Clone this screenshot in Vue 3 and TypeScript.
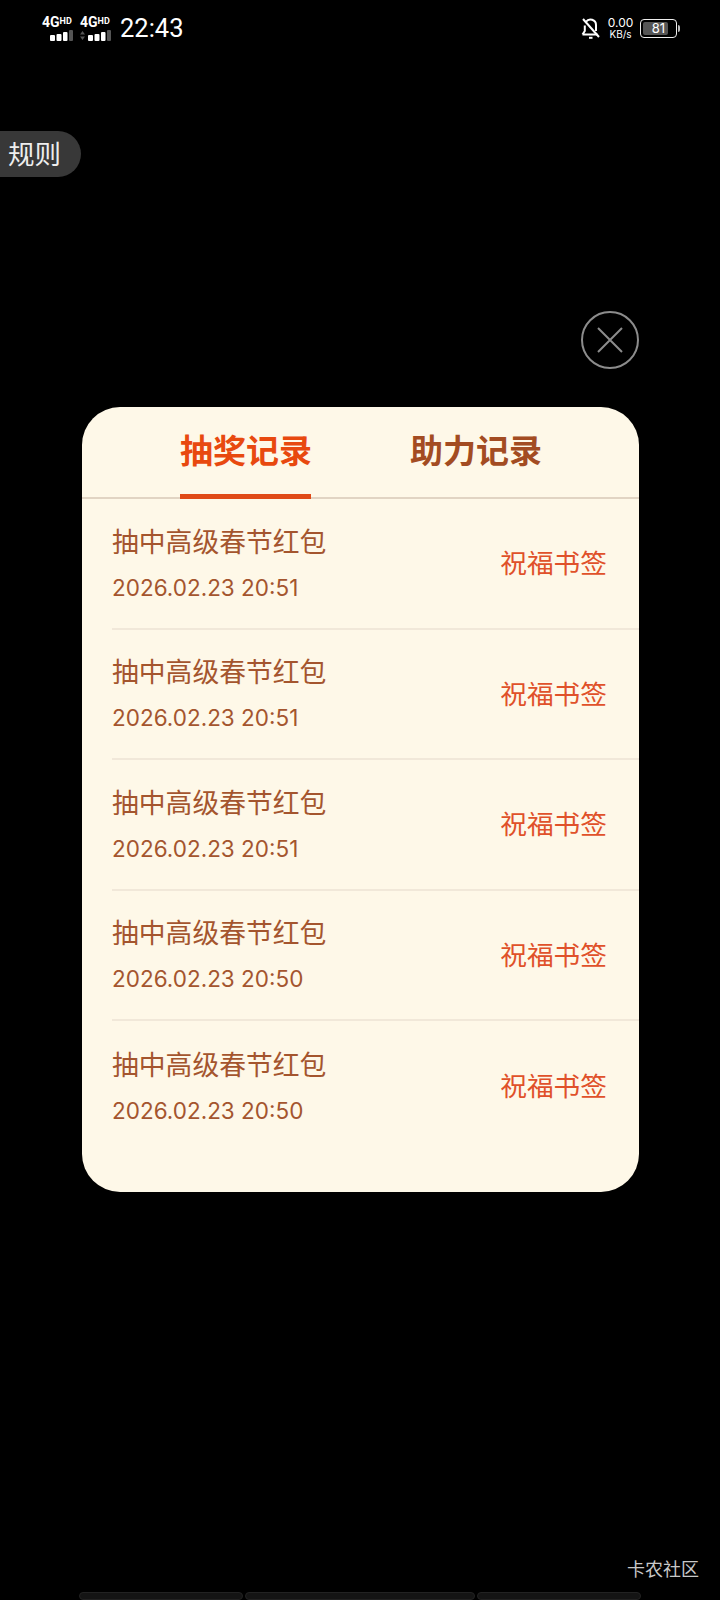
<script setup lang="ts">
import { ref } from "vue";

type RecordRow = { title: string; time: string; action: string };

const tabs = ["抽奖记录", "助力记录"];
const activeTab = ref(0);

const rows: RecordRow[] = [
  { title: "抽中高级春节红包", time: "2026.02.23 20:51", action: "祝福书签" },
  { title: "抽中高级春节红包", time: "2026.02.23 20:51", action: "祝福书签" },
  { title: "抽中高级春节红包", time: "2026.02.23 20:51", action: "祝福书签" },
  { title: "抽中高级春节红包", time: "2026.02.23 20:50", action: "祝福书签" },
  { title: "抽中高级春节红包", time: "2026.02.23 20:50", action: "祝福书签" },
];
</script>

<template>
  <div class="page">
    <!-- status bar -->
    <div class="status">
      <div class="status-left">
        <div v-for="n in 2" :key="n" class="net">
          <div class="net-label">4G<sup>HD</sup></div>
          <svg width="31" height="11" viewBox="0 0 31 11">
            <path v-if="n === 2" d="M0 4.500 2.500 1 5 4.500zM0 6.500 2.500 10 5 6.500z" fill="#555" />
            <rect x="8" y="5" width="5" height="6" rx="1" fill="#fff" />
            <rect x="14.500" y="4" width="5" height="7" rx="1" fill="#fff" />
            <rect x="21" y="2" width="4.500" height="9" rx="1" fill="#fff" />
            <rect x="27" y="0" width="4" height="11" rx="1" fill="#555" />
          </svg>
        </div>
        <span class="clock">22:43</span>
      </div>
      <div class="status-right">
        <svg class="bell" width="20" height="21" viewBox="0 0 20 21" fill="none" stroke="#fff" stroke-width="2">
          <path d="M1.500 16.500h15M5 3.800A5.500 5.500 0 0 1 15 7v6M3.800 7.500v5.500l-2.300 3.500" />
          <path d="M8 19.800h3.500" />
          <path d="M2 1l16 18" />
        </svg>
        <div class="speed">
          <span class="speed-num">0.00</span>
          <span class="speed-unit">KB/s</span>
        </div>
        <div class="battery">
          <div class="battery-body">
            <div class="battery-fill"></div>
            <span class="battery-num">81</span>
          </div>
          <div class="battery-tip"></div>
        </div>
      </div>
    </div>

    <div class="rule-pill">规则</div>

    <div class="close-row">
      <button class="close-btn" type="button" aria-label="关闭">
        <svg width="26" height="26" viewBox="0 0 26 26" fill="none" stroke="#8c8c8c" stroke-width="2">
          <path d="M1 1l24 24M25 1 1 25" />
        </svg>
      </button>
    </div>

    <div class="card">
      <div class="tabs">
        <div
          v-for="(tab, i) in tabs"
          :key="tab"
          class="tab"
          :class="{ active: i === activeTab }"
          @click="activeTab = i"
        >
          {{ tab }}
        </div>
      </div>
      <div class="list">
        <div v-for="(row, i) in rows" :key="i" class="row">
          <div class="row-main">
            <div class="row-title">{{ row.title }}</div>
            <div class="row-time">{{ row.time }}</div>
          </div>
          <div class="row-action">{{ row.action }}</div>
        </div>
      </div>
    </div>

    <div class="watermark">卡农社区</div>

    <div class="home-bars">
      <div class="bar bar-a"></div>
      <div class="bar bar-b"></div>
      <div class="bar bar-c"></div>
    </div>
  </div>
</template>

<style scoped>
.page {
  width: 720px;
  height: 1600px;
  overflow: hidden;
  background: #000;
  font-family: Inter, "Noto Sans CJK SC", sans-serif;
  display: flex;
  flex-direction: column;
}

/* status bar */
.status {
  height: 56px;
  padding: 0 40px 0 42px;
  box-sizing: border-box;
  display: flex;
  justify-content: space-between;
  align-items: center;
  color: #fff;
}
.status-left {
  display: flex;
  align-items: center;
  gap: 7px;
}
.net {
  width: 31px;
  margin-top: 1px;
  display: flex;
  flex-direction: column;
  gap: 1px;
}
.net-label {
  font-family: Roboto, sans-serif;
  font-size: 14px;
  line-height: 13px;
  font-weight: 700;
  white-space: nowrap;
}
.net-label sup {
  font-size: 9px;
  line-height: 0;
  vertical-align: 3px;
}
.clock {
  font-family: Roboto, sans-serif;
  font-size: 25.500px;
  line-height: 28px;
  margin-left: 2px;
}
.status-right {
  display: flex;
  align-items: center;
}
.bell {
  margin-right: 1px;
}
.speed {
  display: flex;
  flex-direction: column;
  align-items: center;
  margin-left: 6px;
  width: 25px;
}
.speed-num {
  font-size: 12px;
  line-height: 12px;
}
.speed-unit {
  font-size: 10px;
  line-height: 10px;
}
.battery {
  display: flex;
  align-items: center;
  margin-left: 7px;
}
.battery-body {
  width: 37px;
  height: 19px;
  border: 1.500px solid #eee;
  border-radius: 4px;
  position: relative;
  box-sizing: border-box;
}
.battery-fill {
  position: absolute;
  left: 2px;
  top: 2px;
  bottom: 2px;
  width: 25px;
  background: #555;
  border-radius: 2px;
}
.battery-num {
  position: absolute;
  inset: 0;
  text-align: center;
  font-size: 13px;
  line-height: 16px;
}
.battery-tip {
  width: 2px;
  height: 7px;
  margin-left: 1px;
  background: #bbb;
  border-radius: 0 2px 2px 0;
}

.rule-pill {
  margin-top: 75px;
  width: 81px;
  height: 46px;
  box-sizing: border-box;
  padding-left: 8px;
  border-radius: 0 23px 23px 0;
  background: #383838;
  color: #eee;
  font-size: 26.500px;
  line-height: 46px;
}

.close-row {
  margin-top: 134px;
  padding-right: 81px;
  display: flex;
  justify-content: flex-end;
}
.close-btn {
  width: 58px;
  height: 58px;
  padding: 0;
  border: 2px solid #8c8c8c;
  border-radius: 50%;
  background: transparent;
  display: flex;
  align-items: center;
  justify-content: center;
}

/* card */
.card {
  margin: 38px 81px 0 82px;
  height: 785px;
  background: #fef8e8;
  border-radius: 38px;
  overflow: hidden;
}
.tabs {
  height: 92px;
  box-sizing: border-box;
  border-bottom: 2px solid #e1d4c3;
  padding-left: 98px;
  display: flex;
  gap: 99px;
}
.tab {
  width: 131px;
  height: 92px;
  box-sizing: border-box;
  font-size: 33px;
  font-weight: 700;
  line-height: 89px;
  white-space: nowrap;
  color: #a34c22;
}
.tab.active {
  color: #e8490f;
  border-bottom: 5px solid #e04a17;
}
.list {
  padding-left: 30px;
}
.row {
  height: 130.500px;
  box-sizing: border-box;
  padding-right: 32px;
  border-bottom: 2px solid #f1e8d9;
  display: flex;
  align-items: center;
  justify-content: space-between;
}
.row:last-child {
  border-bottom: none;
}
.row-main {
  margin-top: 2px;
  display: flex;
  flex-direction: column;
  gap: 13px;
}
.row-title {
  font-size: 26.800px;
  line-height: 34px;
  color: #a4552e;
}
.row-time {
  font-size: 22.500px;
  line-height: 32px;
  color: #a4552e;
}
.row-action {
  font-size: 26.700px;
  line-height: 36px;
  color: #e0512a;
}

.watermark {
  margin-top: 366px;
  padding-right: 21px;
  text-align: right;
  font-size: 18px;
  line-height: 24px;
  color: #c8c8c8;
}
.home-bars {
  margin-top: 10px;
  padding-left: 79px;
  display: flex;
  gap: 2px;
}
.bar {
  height: 8px;
  box-sizing: border-box;
  background: #141414;
  border: 1px solid #222;
  border-radius: 4px;
}
.bar-a {
  width: 164px;
}
.bar-b {
  width: 230px;
}
.bar-c {
  width: 164px;
}
</style>

<style>
body {
  background: #000;
}
</style>
